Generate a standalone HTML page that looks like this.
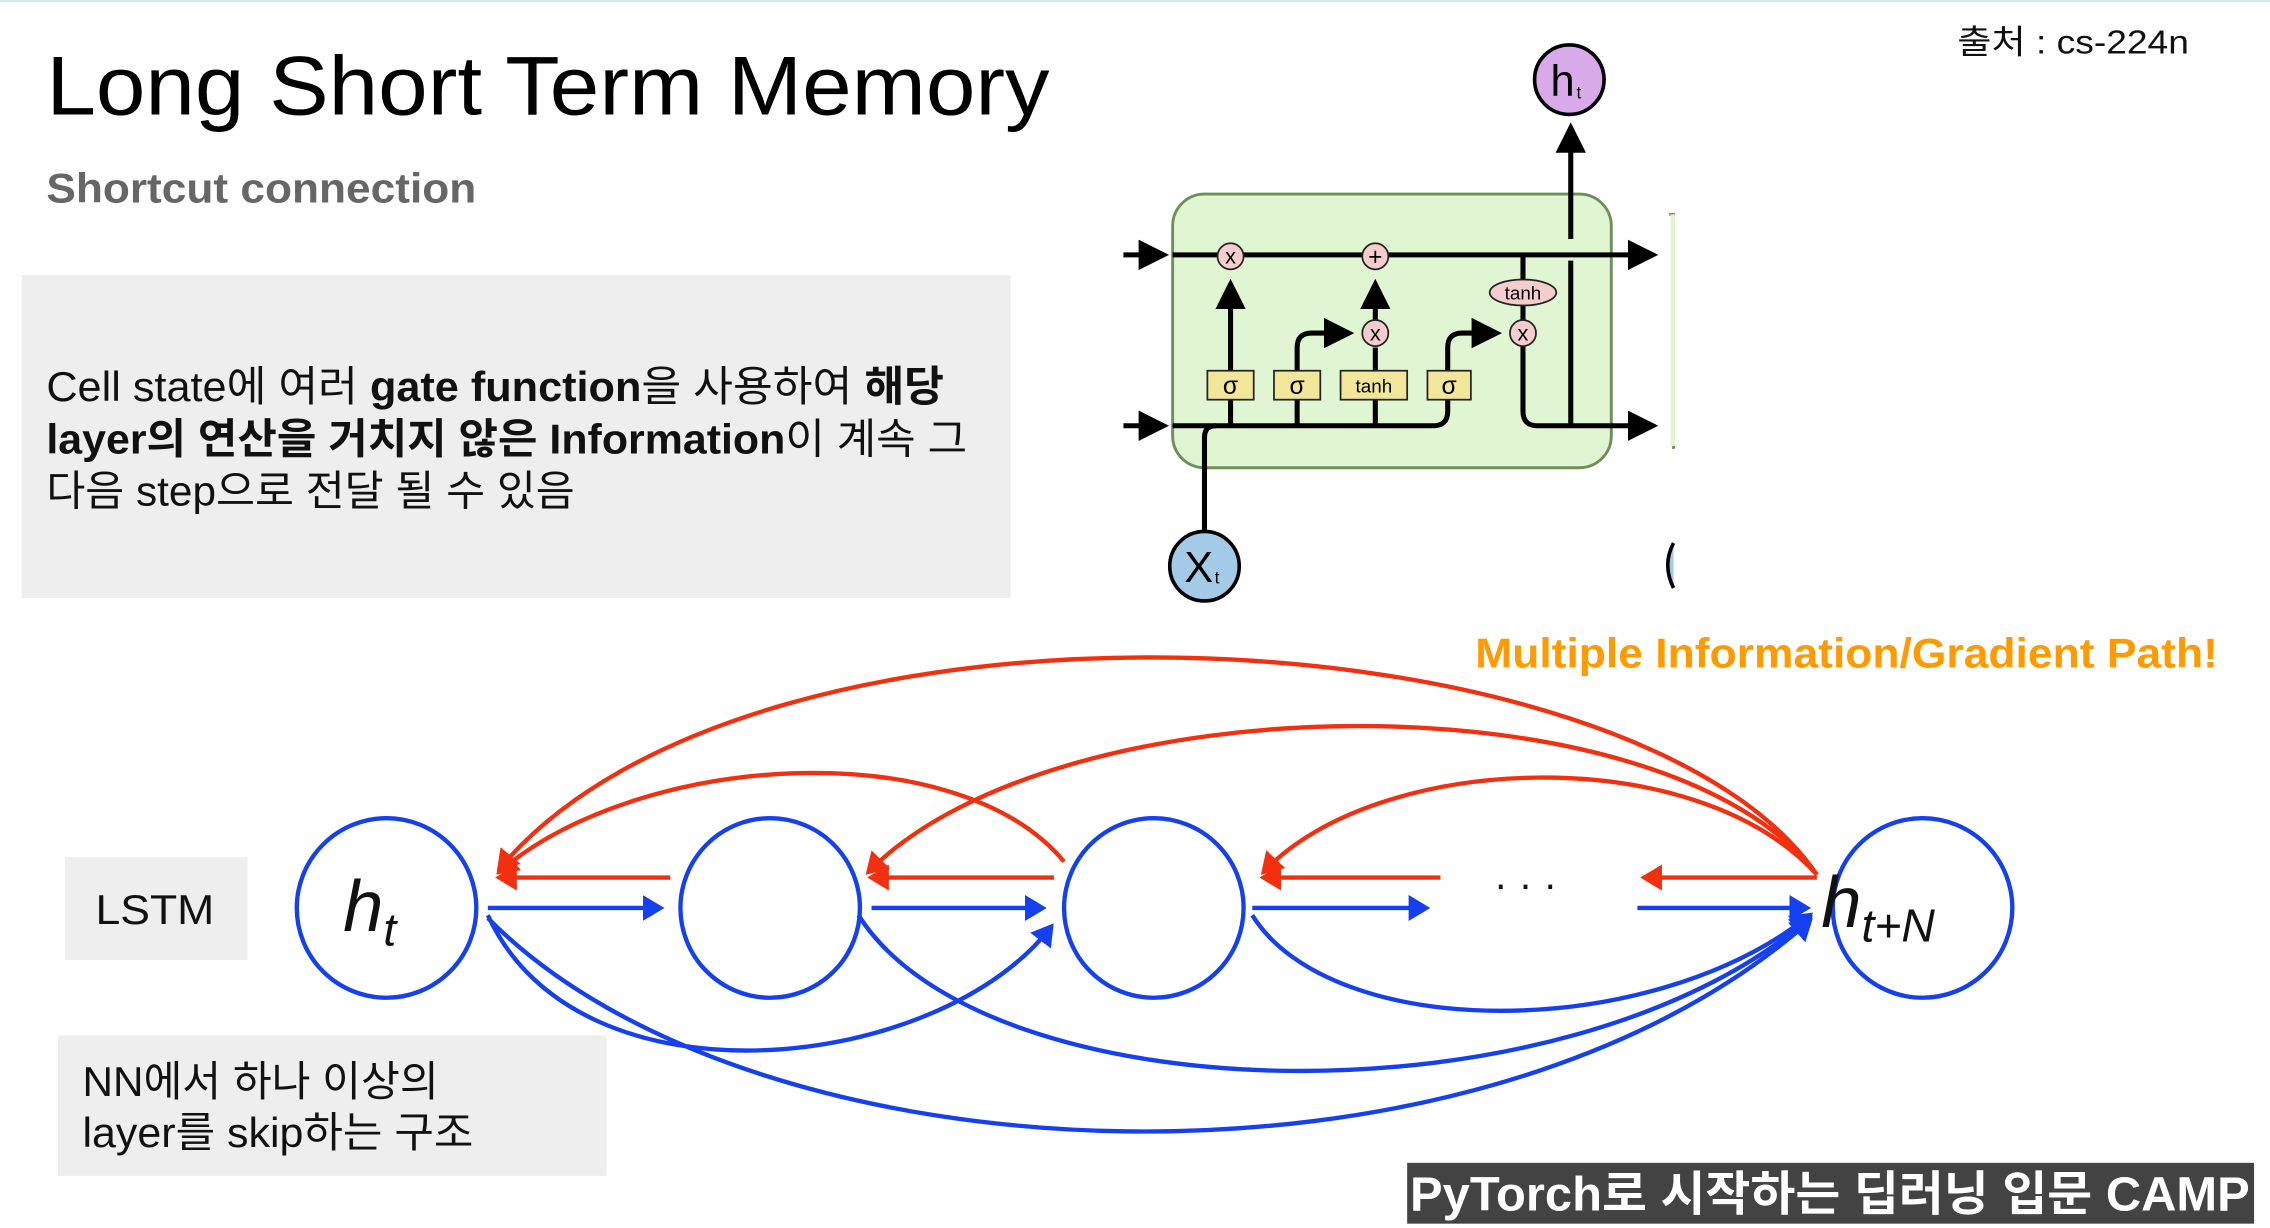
<!DOCTYPE html>
<html><head><meta charset="utf-8"><style>
html,body{margin:0;padding:0;background:#fff;}
svg{display:block;}
text{font-family:"Liberation Sans","Noto Sans CJK KR",sans-serif;}
</style></head><body>
<svg width="2270" height="1228" viewBox="0 0 1568 848" preserveAspectRatio="none" xmlns="http://www.w3.org/2000/svg">
<defs>
<marker id="ak" markerWidth="6" markerHeight="6" refX="5" refY="3" orient="auto" markerUnits="strokeWidth"><path d="M0,0 L6,3 L0,6 z" fill="#000"/></marker>
<marker id="ar" markerWidth="5" markerHeight="6" refX="4" refY="3" orient="auto" markerUnits="strokeWidth"><path d="M0,0 L5,3 L0,6 z" fill="#f2300f"/></marker>
<marker id="ab" markerWidth="5" markerHeight="6" refX="4" refY="3" orient="auto" markerUnits="strokeWidth"><path d="M0,0 L5,3 L0,6 z" fill="#1540f0"/></marker>
</defs>
<rect x="0" y="0" width="1568" height="1.5" fill="#d7e6ee"/>
<text x="32" y="79" font-size="58" fill="#000" textLength="693" lengthAdjust="spacingAndGlyphs">Long Short Term Memory</text>
<text x="32" y="140" font-size="29" font-weight="bold" fill="#666" textLength="297" lengthAdjust="spacingAndGlyphs">Shortcut connection</text>
<text x="1352" y="37" font-size="23" fill="#111" textLength="160" lengthAdjust="spacingAndGlyphs">출처 : cs-224n</text>
<rect x="15" y="190" width="683" height="223" fill="#eeeeee"/>
<g font-size="29" fill="#111">
<text x="32" y="277" textLength="620" lengthAdjust="spacingAndGlyphs">Cell state에 여러 <tspan font-weight="bold">gate function</tspan>을 사용하여 <tspan font-weight="bold">해당</tspan></text>
<text x="32" y="313" textLength="636" lengthAdjust="spacingAndGlyphs"><tspan font-weight="bold">layer의 연산을 거치지 않은 Information</tspan>이 계속 그</text>
<text x="32" y="349" textLength="365" lengthAdjust="spacingAndGlyphs">다음 step으로 전달 될 수 있음</text>
</g>
<!-- LSTM cell -->
<rect x="810" y="134" width="303" height="189" rx="22" fill="#e0f5d2" stroke="#6e8e5a" stroke-width="2"/>
<path d="M1153 148 L1156 148 L1156 310" fill="none" stroke="#6e8e5a" stroke-width="2"/>
<rect x="1154" y="148" width="3" height="160" fill="#e0f5d2"/>
<g stroke="#000" stroke-width="3.5" fill="none">
<line x1="776" y1="176" x2="804" y2="176" marker-end="url(#ak)"/>
<line x1="776" y1="294" x2="804" y2="294" marker-end="url(#ak)"/>
<line x1="810" y1="176" x2="1142" y2="176" marker-end="url(#ak)"/>
<path d="M810 294 L990 294 Q1000 294 1000 284 L1000 240 Q1000 230 1010 230 L1034 230" marker-end="url(#ak)"/>
<path d="M832 368 L832 302 Q832 294 840 294"/>
<line x1="850" y1="294" x2="850" y2="196" marker-end="url(#ak)"/>
<path d="M896 294 L896 240 Q896 230 906 230 L932 230" marker-end="url(#ak)"/>
<line x1="950" y1="294" x2="950" y2="240"/>
<line x1="950" y1="222" x2="950" y2="196" marker-end="url(#ak)"/>
<line x1="1052" y1="176" x2="1052" y2="222"/>
<path d="M1052 238 L1052 284 Q1052 294 1062 294 L1142 294" marker-end="url(#ak)"/>
<line x1="1085" y1="294" x2="1085" y2="180"/>
<line x1="1085" y1="165" x2="1085" y2="88" marker-end="url(#ak)"/>
</g>
<g stroke="#222" stroke-width="1.2">
<rect x="834" y="256" width="32" height="20" fill="#f2e69a"/>
<rect x="880" y="256" width="32" height="20" fill="#f2e69a"/>
<rect x="926" y="256" width="46" height="20" fill="#f2e69a"/>
<rect x="986" y="256" width="30" height="20" fill="#f2e69a"/>
<circle cx="850" cy="177" r="9" fill="#f6cccc"/>
<circle cx="950" cy="177" r="9" fill="#f6cccc"/>
<circle cx="950" cy="230" r="9" fill="#f6cccc"/>
<circle cx="1052" cy="230" r="9" fill="#f6cccc"/>
<ellipse cx="1052" cy="202" rx="23" ry="9" fill="#f6cccc"/>
</g>
<g font-size="15" fill="#000" text-anchor="middle" font-family="Liberation Sans, sans-serif">
<text x="850" y="182">x</text><text x="950" y="183" font-size="17">+</text><text x="950" y="235">x</text><text x="1052" y="235">x</text>
<text x="1052" y="207" font-size="13">tanh</text>
<text x="850" y="272" font-size="17" font-family="DejaVu Sans, sans-serif">σ</text><text x="896" y="272" font-size="17" font-family="DejaVu Sans, sans-serif">σ</text>
<text x="949" y="271" font-size="13">tanh</text><text x="1001" y="272" font-size="17" font-family="DejaVu Sans, sans-serif">σ</text>
</g>
<circle cx="1084" cy="55" r="24" fill="#d9aaea" stroke="#000" stroke-width="2.5"/>
<text x="1071" y="66" font-size="30" fill="#000">h</text><text x="1089" y="68" font-size="12">t</text>
<circle cx="832" cy="391" r="24" fill="#a3cbe8" stroke="#000" stroke-width="2.5"/>
<text x="818" y="402" font-size="30" fill="#000">X</text><text x="839" y="403" font-size="12">t</text>
<path d="M1156 375 Q1148 390 1156 406" stroke="#000" stroke-width="2.5" fill="#a3cbe8"/>
<text x="1019" y="461" font-size="29" font-weight="bold" fill="#ff9a00" textLength="513" lengthAdjust="spacingAndGlyphs">Multiple Information/Gradient Path!</text>
<!-- chain -->
<g fill="none" stroke="#1540f0" stroke-width="3">
<circle cx="267" cy="627" r="62"/><circle cx="532" cy="627" r="62"/><circle cx="797" cy="627" r="62"/><circle cx="1328" cy="627" r="62"/>
</g>
<text x="237" y="643" font-size="50" font-style="italic" font-family="Liberation Serif, serif" fill="#111">h<tspan font-size="32" dy="10">t</tspan></text>
<text x="1258" y="640" font-size="50" font-style="italic" font-family="Liberation Serif, serif" fill="#111">h<tspan font-size="32" dy="10">t+N</tspan></text>
<text x="1032" y="620" font-size="28" fill="#111">· · ·</text>
<g fill="none" stroke="#f2300f" stroke-width="3">
<line x1="463" y1="606" x2="345" y2="606" marker-end="url(#ar)"/>
<line x1="728" y1="606" x2="602" y2="606" marker-end="url(#ar)"/>
<line x1="995" y1="606" x2="873" y2="606" marker-end="url(#ar)"/>
<line x1="1255" y1="606" x2="1136" y2="606" marker-end="url(#ar)"/>
<path d="M1255 604 C1130 420 520 390 345 600" marker-end="url(#ar)"/>
<path d="M735 595 C660 505 440 520 345 602" marker-end="url(#ar)"/>
<path d="M1255 604 C1150 465 730 470 600 602" marker-end="url(#ar)"/>
<path d="M1255 604 C1170 510 950 520 873 602" marker-end="url(#ar)"/>
</g>
<g fill="none" stroke="#1540f0" stroke-width="3">
<line x1="337" y1="627" x2="456" y2="627" marker-end="url(#ab)"/>
<line x1="602" y1="627" x2="720" y2="627" marker-end="url(#ab)"/>
<line x1="865" y1="627" x2="985" y2="627" marker-end="url(#ab)"/>
<line x1="1131" y1="627" x2="1248" y2="627" marker-end="url(#ab)"/>
<path d="M337 632 C400 770 650 740 726 640" marker-end="url(#ab)"/>
<path d="M593 632 C680 770 1080 780 1250 634" marker-end="url(#ab)"/>
<path d="M865 632 C920 720 1140 720 1250 632" marker-end="url(#ab)"/>
<path d="M337 634 C520 820 1020 840 1250 636" marker-end="url(#ab)"/>
</g>
<rect x="45" y="592" width="126" height="71" fill="#eeeeee"/>
<text x="66" y="638" font-size="29" fill="#111" textLength="82" lengthAdjust="spacingAndGlyphs">LSTM</text>
<rect x="40" y="715" width="379" height="97" fill="#eeeeee"/>
<text x="57" y="757" font-size="29" fill="#111" textLength="246" lengthAdjust="spacingAndGlyphs">NN에서 하나 이상의</text>
<text x="57" y="792" font-size="29" fill="#111" textLength="270" lengthAdjust="spacingAndGlyphs">layer를 skip하는 구조</text>
<rect x="972" y="803" width="585" height="42" fill="#434343"/>
<text x="974" y="836" font-size="33" font-weight="bold" fill="#fff" textLength="580" lengthAdjust="spacingAndGlyphs">PyTorch로 시작하는 딥러닝 입문 CAMP</text>
</svg>
</body></html>
